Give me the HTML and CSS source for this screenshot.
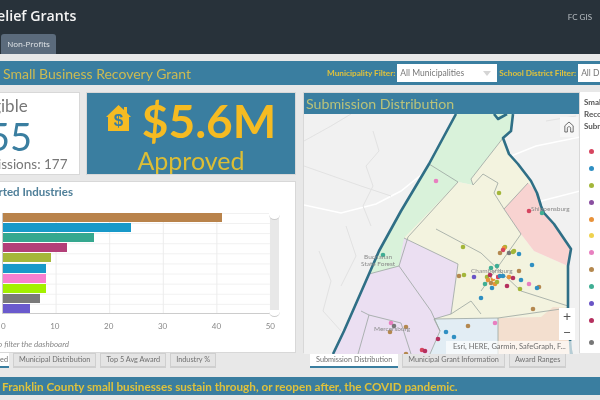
FILE: index.html
```html
<!DOCTYPE html>
<html lang="en">
<head>
<meta charset="utf-8">
<title>Relief Grants</title>
<link rel="stylesheet" href="styles.css">
</head>
<body>
<div class="page">
  <header class="header">
    <div class="head-row">
      <h1 class="app-title">Relief Grants</h1>
      <span class="org">FC GIS</span>
    </div>
    <nav class="head-tabs"><span class="head-tab">Non-Profits</span></nav>
  </header>

  <section class="titlebar">
    <span class="grant-title">Small Business Recovery Grant</span>
    <div class="filters">
      <label class="filter-label">Municipality Filter:</label>
      <div class="select"><span>All Municipalities</span><i class="caret"></i></div>
      <label class="filter-label">School District Filter:</label>
      <div class="select select-second"><span>All Districts</span></div>
    </div>
  </section>

  <main class="dash">
    <div class="left">
      <div class="stats">
        <div class="card eligible">
          <div class="el-label">Eligible</div>
          <div class="el-num">155</div>
          <div class="el-sub">Total Submissions: 177</div>
        </div>
        <div class="approved">
          <div class="amount-row">
            <svg class="house" viewBox="0 0 25 26" width="25" height="26">
              <path fill="#f5bb22" d="M12.5 0 18 5V2h3v6l4 4h-2v14H2V12H0z"/>
              <text x="12.5" y="21" text-anchor="middle" class="house-dollar">$</text>
            </svg>
            <span class="amount">$5.6M</span>
          </div>
          <div class="approved-label">Approved</div>
        </div>
      </div>

      <div class="card chart">
        <h2 class="chart-title">Most Reported Industries</h2>
        <div class="plot-wrap">
          <div class="plot">
            <div class="bar bar-brown" style="width:82%"></div>
            <div class="bar bar-blue" style="width:48%"></div>
            <div class="bar bar-teal" style="width:34%"></div>
            <div class="bar bar-plum" style="width:24%"></div>
            <div class="bar bar-olive" style="width:18%"></div>
            <div class="bar bar-blue" style="width:16%"></div>
            <div class="bar bar-pink" style="width:16%"></div>
            <div class="bar bar-lime" style="width:16%"></div>
            <div class="bar bar-gray" style="width:14%"></div>
            <div class="bar bar-violet" style="width:10%"></div>
          </div>
          <div class="scroller"><i class="handle handle-top"></i><i class="handle handle-bottom"></i></div>
        </div>
        <div class="axis"><span>0</span><span>10</span><span>20</span><span>30</span><span>40</span><span>50</span></div>
        <p class="hint">Select a bar to filter the dashboard</p>
      </div>

      <div class="tabs tabs-left">
        <span class="tab active tab-cut">Most Reported</span>
        <span class="tab">Municipal Distribution</span>
        <span class="tab">Top 5 Avg Award</span>
        <span class="tab">Industry %</span>
      </div>
    </div>

    <div class="right">
      <div class="map-row">
        <div class="map-panel">
          <div class="map-head">Submission Distribution</div>
          <div class="map">
            <svg class="map-svg" viewBox="303 113 276 240" width="276" height="240">
              <rect x="303" y="113" width="276" height="240" fill="#f1f1f1"/>
              <g fill="none" stroke="#fff" stroke-width="1.5">
                <path d="M303 204 340 212 375 203 400 190 425 170"/>
                <path d="M510 155 535 145 579 136"/>
                <path d="M540 200 579 190"/>
              </g>
              <g fill="none" stroke="#e2e2e2" stroke-width="1">
                <path d="M303 140 330 125 350 113"/>
                <path d="M303 165 360 185 390 195"/>
                <path d="M372 130 378 150 365 165 372 185 362 205 370 225"/>
                <path d="M318 250 330 280 322 310 340 330"/>
                <path d="M345 225 355 255 340 285"/>
                <path d="M545 120 575 115"/>
              </g>
              <polygon fill="#d9f2da" points="455,113 512,113 510,130 502,137 470,178 472,184 457,181 407,236 398,265 368,273 378,250 400,210 428,163"/>
              <polygon fill="#f3f3df" points="502,137 508,153 517,163 530,180 538,193 527,182 503,208 520,233 533,250 567,265 567,307 545,316 497,317 433,318 450,313 457,263 430,250 403,237 457,181 472,184 470,178"/>
              <polygon fill="#f8d3d1" points="527,182 538,193 542,210 553,223 570,248 567,265 533,250 520,233 503,208"/>
              <polygon fill="#ebdff2" points="403,237 430,250 457,263 450,313 433,318 439,330 429,353 332,353 343,330 368,273 398,265"/>
              <polygon fill="#e2edf4" points="433,318 497,317 497,353 429,353 439,330"/>
              <polygon fill="#f3dfcf" points="497,317 540,316 552,306 567,307 570,353 497,353"/>
              <g fill="none" stroke="#9aa5a0" stroke-width="0.8">
                <path d="M428,163 457,181 407,236"/>
                <path d="M502,137 470,178 472,184 482,173 497,182 493,192 503,208 520,233 480,290"/>
                <path d="M403,237 430,250 457,263 450,313 433,318 439,330 429,353"/>
                <path d="M398,265 407,236"/>
                <path d="M398,265 368,273"/>
                <path d="M398,265 430,310 439,330"/>
                <path d="M360,310 368,314 357,353"/>
                <path d="M368,314 400,322 410,353"/>
                <path d="M435,228 480,252 520,290 567,305"/>
                <path d="M450,313 470,300 480,313"/>
                <path d="M433,318 497,317 567,307"/>
                <path d="M497,317 497,353"/>
                <path d="M527,182 503,208"/>
              </g>
              <path fill="none" stroke="#2f6f86" stroke-width="2.600" stroke-linejoin="round" d="M455 113 428 163 400 210 378 250 368 273 343 330 332 353"/>
              <path fill="none" stroke="#2f6f86" stroke-width="2.600" stroke-linejoin="round" d="M493 113 497 118 506 113M512 113 510 130 502 137 508 153 517 163 530 180 536 192 540 205 543 212 553 223 570 248 567 265 567 307 570 353"/>
              <g class="dots">
                <circle cx="435" cy="180" fill="#e87fc0"/><circle cx="498" cy="192" fill="#a3b63a"/><circle cx="528" cy="210" fill="#d6455f"/><circle cx="541" cy="212" fill="#3fae94"/>
                <circle cx="462" cy="246" fill="#a3b63a"/><circle cx="504" cy="246" fill="#a3b63a"/><circle cx="503" cy="247" fill="#e8923a"/><circle cx="502" cy="249" fill="#d6455f"/><circle cx="513" cy="250" fill="#a3b63a"/>
                <circle cx="382" cy="254" fill="#3fae94"/><circle cx="499" cy="252" fill="#b4884f"/><circle cx="508" cy="252" fill="#777"/><circle cx="512" cy="251" fill="#a3b63a"/><circle cx="518" cy="253" fill="#2f8fc2"/>
                <circle cx="531" cy="264" fill="#2f8fc2"/><circle cx="518" cy="270" fill="#b4884f"/><circle cx="458" cy="275" fill="#b4884f"/><circle cx="463" cy="274" fill="#a3b63a"/><circle cx="473" cy="276" fill="#6a55c6"/>
                <circle cx="496" cy="265" fill="#3fae94"/><circle cx="490" cy="267" fill="#3fae94"/>
                <circle cx="486" cy="276" fill="#a3b63a"/><circle cx="489" cy="274" fill="#b5305f"/><circle cx="492" cy="278" fill="#e8923a"/><circle cx="497" cy="276" fill="#d6455f"/><circle cx="499" cy="275" fill="#2f8fc2"/><circle cx="502" cy="275" fill="#2f8fc2"/><circle cx="487" cy="279" fill="#e8923a"/><circle cx="490" cy="282" fill="#b4884f"/><circle cx="494" cy="283" fill="#e8923a"/><circle cx="496" cy="281" fill="#a3b63a"/><circle cx="484" cy="283" fill="#3fae94"/>
                <circle cx="508" cy="276" fill="#e8923a"/><circle cx="512" cy="277" fill="#b5305f"/><circle cx="520" cy="279" fill="#2f8fc2"/><circle cx="528" cy="283" fill="#e87fc0"/><circle cx="538" cy="286" fill="#b4884f"/><circle cx="536" cy="287" fill="#2f8fc2"/><circle cx="519" cy="288" fill="#a3b63a"/><circle cx="506" cy="285" fill="#b5305f"/><circle cx="491" cy="287" fill="#2f8fc2"/>
                <circle cx="480" cy="297" fill="#2f8fc2"/><circle cx="532" cy="308" fill="#b4884f"/><circle cx="494" cy="322" fill="#e87fc0"/><circle cx="467" cy="325" fill="#b4884f"/><circle cx="445" cy="331" fill="#2f8fc2"/><circle cx="453" cy="336" fill="#2f8fc2"/><circle cx="437" cy="338" fill="#b5305f"/>
                <circle cx="390" cy="322" fill="#e87fc0"/><circle cx="389" cy="331" fill="#b4884f"/><circle cx="393" cy="325" fill="#777"/><circle cx="405" cy="326" fill="#b4884f"/><circle cx="421" cy="349" fill="#d6455f"/><circle cx="424" cy="350" fill="#b5305f"/><circle cx="405" cy="353" fill="#b4884f"/>
              </g>
              <circle cx="493" cy="276" r="2" fill="#fff"/>
              <g class="place">
                <text x="530" y="210">Shippensburg</text>
                <text x="470" y="272">Chambersburg</text>
                <text x="373" y="330">Mercersburg</text>
                <text x="363" y="258">Buchanan</text>
                <text x="360" y="265">State Forest</text>
              </g>
            </svg>
            <button class="home" type="button" aria-label="Home">
              <svg viewBox="0 0 12 14" width="10" height="12"><path fill="none" stroke="#555" stroke-width="1" d="M1 13V5.500L6 1l5 4.500V13H8V8.500C8 6 4 6 4 8.500V13z"/></svg>
            </button>
            <div class="zoom"><span>+</span><span>−</span></div>
            <div class="attrib">Esri, HERE, Garmin, SafeGraph, F...</div>
          </div>
        </div>
        <aside class="legend">
          <div class="legend-title">Small<br>Recovery<br>Submissions</div>
          <ul class="legend-list">
            <li><i class="dot c-red"></i></li><li><i class="dot c-blue"></i></li><li><i class="dot c-olive"></i></li><li><i class="dot c-purple"></i></li>
            <li><i class="dot c-orange"></i></li><li><i class="dot c-yellow"></i></li><li><i class="dot c-pink"></i></li><li><i class="dot c-brown"></i></li>
            <li><i class="dot c-teal"></i></li><li><i class="dot c-violet"></i></li><li><i class="dot c-crimson"></i></li><li class="last"><i class="dot c-gray"></i></li>
          </ul>
        </aside>
      </div>
      <div class="tabs tabs-right">
        <span class="tab active">Submission Distribution</span>
        <span class="tab">Municipal Grant Information</span>
        <span class="tab">Award Ranges</span>
      </div>
    </div>
  </main>

  <footer class="footer">Franklin County small businesses sustain through, or reopen after, the COVID pandemic.</footer>
</div>
</body>
</html>
```
FILE: styles.css
```css
* { box-sizing: border-box; }
html, body { margin: 0; padding: 0; }
body { background: #e8e8e8; font-family: Lato, "Open Sans", sans-serif; }
.page { width: 600px; height: 400px; overflow: hidden; background: #e8e8e8; filter: blur(.4px); }

.header { height: 54px; background: #28323a; display: flex; flex-direction: column; }
.head-row { height: 34px; display: flex; justify-content: space-between; align-items: flex-start; }
.app-title { margin: 4px 0 0 -12px; font: 600 14.200px/24px "Open Sans", sans-serif; color: #f4f4f4; white-space: nowrap; }
.org { margin: 9px 8px 0 0; font-size: 8px; line-height: 16px; color: #b9bfc3; }
.head-tabs { height: 20px; display: flex; padding-left: 1px; }
.head-tab { width: 55px; height: 20px; background: #5b6b7c; border-radius: 3px 3px 0 0; color: #e3e7ea; font: 8px/20px "Open Sans", sans-serif; text-align: center; }

.titlebar { margin-top: 7px; height: 24px; background: #3a7ea0; display: flex; align-items: center; justify-content: space-between; padding-left: 3px; white-space: nowrap; }
.grant-title { font-size: 14px; color: #cdbb52; }
.filters { display: flex; align-items: center; width: 273px; flex: none; gap: 2px; }
.filter-label { font-size: 8.200px; font-weight: 700; color: #e0c23c; }
.select { flex: none; width: 100px; height: 18px; background: #fff; color: #777; font-size: 8.500px; line-height: 18px; padding-left: 3px; position: relative; }
.select-second { width: 60px; margin-right: -30px; }
.caret { position: absolute; right: 6px; top: 7px; border: 4px solid transparent; border-top: 5px solid #d5d5d5; border-bottom: 0; }

.dash { display: flex; gap: 7px; padding-top: 7px; height: 284px; }
.left { width: 296px; flex: none; display: flex; flex-direction: column; }
.right { width: 297px; flex: none; display: flex; flex-direction: column; }

.stats { display: flex; gap: 6px; height: 83px; }
.card { background: #fff; border: 1px solid #d8d8d8; }
.eligible { width: 160px; margin-left: -80px; flex: none; text-align: center; color: #777; }
.el-label { font-size: 17px; line-height: 20px; margin-top: 3px; margin-left: 2px; }
.el-num { font-size: 38px; line-height: 38px; color: #3a7ea0; margin-top: 1px; margin-left: -2px; }
.el-sub { font-size: 13.500px; line-height: 16px; margin-top: 1px; }
.approved { flex: 1; background: #3a7ea0; border: 1px solid #d8d8d8; overflow: hidden; text-align: center; }
.amount-row { display: flex; justify-content: center; align-items: center; gap: 11px; height: 56px; }
.house { flex: none; margin-top: -6px; }
.house-dollar { font: 700 17px "Liberation Sans", sans-serif; fill: #3a7ea0; }
.amount { font-size: 46px; line-height: 56px; font-weight: 700; color: #f5bb22; }
.approved-label { font-size: 25px; line-height: 30px; color: #dcbe35; margin-top: -4px; }

.chart { margin: 6px 0 0 -80px; height: 172px; width: 376px; padding: 0 0 0 80px; position: relative; }
.chart-title { position: absolute; right: 222px; top: 1px; margin: 0; font-size: 11.500px; line-height: 18px; font-weight: 700; color: #4f7f99; white-space: nowrap; }
.plot-wrap { display: flex; margin: 31px 0 0 1px; height: 101px; }
.plot { width: 268px; height: 101px; display: flex; flex-direction: column; justify-content: space-between; border-left: 1px solid #ccc; border-bottom: 1px solid #ccc;
  background: linear-gradient(90deg, #ececec 1px, transparent 1px) -1px 0 / 53.600px 100%, linear-gradient(#f0f0f0 1px, transparent 1px) 0 0 / 100% 10.100px; }
.bar { height: 9px; flex: none; }
.bar-brown { background: #b9834b; }
.bar-blue { background: #1899c9; }
.bar-teal { background: #35a88f; }
.bar-plum { background: #b33f78; }
.bar-olive { background: #a5b73a; }
.bar-pink { background: #f77fd0; }
.bar-lime { background: #a3f000; }
.bar-gray { background: #7a7a7a; }
.bar-violet { background: #6a5acd; }
.scroller { width: 9px; background: #e8e8e8; position: relative; }
.handle { position: absolute; left: -1px; width: 11px; height: 7px; background: #fff; border-radius: 0 0 6px 6px; border-bottom: 1px solid #ccc; }
.handle-top { top: 0; }
.handle-bottom { bottom: -3px; }
.axis { display: flex; justify-content: space-between; width: 274px; margin: 6px 0 0 0; font-size: 8px; line-height: 12px; color: #888; }
.hint { position: absolute; right: 226px; top: 156px; margin: 0; font-size: 8px; line-height: 12px; font-style: italic; color: #888; white-space: nowrap; }

.tabs { display: flex; gap: 4px; height: 15px; white-space: nowrap; }
.tab { height: 15px; padding: 0 5px; background: #e4e4e4; border: 1px solid #cfcfcf; border-bottom-width: 2px; font-size: 7.300px; line-height: 12px; color: #707070; }
.tab.active { background: #fff; border: 0; border-bottom: 2px solid #3a7ea0; line-height: 14px; padding: 0 6px; }
.tab.tab-cut { margin-left: -51px; width: 60px; text-align: right; padding: 0 1px 0 0; }
.tabs-right { padding-left: 7px; }

.map-row { display: flex; height: 261px; }
.map-panel { width: 277px; flex: none; border: 1px solid #d8d8d8; border-bottom: 0; background: #f1f1f1; }
.map-head { height: 21px; background: #3a7ea0; color: #b9c27a; font-size: 14.200px; line-height: 21px; padding-left: 2px; }
.map { position: relative; height: 240px; overflow: hidden; }
.map-svg { display: block; }
.dots circle { r: 2.300px; }
.place text { font-size: 6.500px; fill: #8a8a8a; }
.home { position: absolute; left: 256px; top: 3px; width: 18px; height: 20px; padding: 0; border: 0; background: #f7f7f7; display: flex; align-items: center; justify-content: center; }
.zoom { position: absolute; left: 255px; top: 194px; width: 16px; height: 32px; background: #fff; display: flex; flex-direction: column; color: #555; font-size: 14px; line-height: 16px; text-align: center; }
.attrib { position: absolute; left: 142px; top: 227px; width: 126px; height: 13px; background: rgba(255,255,255,.65); color: #6e6e6e; font-size: 7.500px; line-height: 12px; padding-left: 7px; white-space: nowrap; }
.legend { flex: 1; background: #fff; padding: 4px 0 0 4px; overflow: hidden; }
.legend-title { font-size: 8px; line-height: 12px; font-weight: 700; color: #555; white-space: nowrap; }
.legend-list { list-style: none; margin: 11px 0 0; padding: 0 0 0 5px; }
.legend-list li { height: 16.900px; display: flex; align-items: center; }
.legend-list li.last { margin-top: 5px; }
.dot { width: 5px; height: 5px; border-radius: 50%; }
.c-red { background: #d6455f; }
.c-blue { background: #2f8fc2; }
.c-olive { background: #a3b63a; }
.c-purple { background: #8a4fa0; }
.c-orange { background: #e8923a; }
.c-yellow { background: #efd24f; }
.c-pink { background: #e880c0; }
.c-brown { background: #b4884f; }
.c-teal { background: #3fae94; }
.c-violet { background: #6a55c6; }
.c-crimson { background: #b5305f; }
.c-gray { background: #777; }

.footer { margin-top: 8px; height: 18px; background: #3a7ea0; color: #dfc23c; font-size: 11.700px; font-weight: 700; line-height: 18px; padding-left: 2px; white-space: nowrap; }
```
